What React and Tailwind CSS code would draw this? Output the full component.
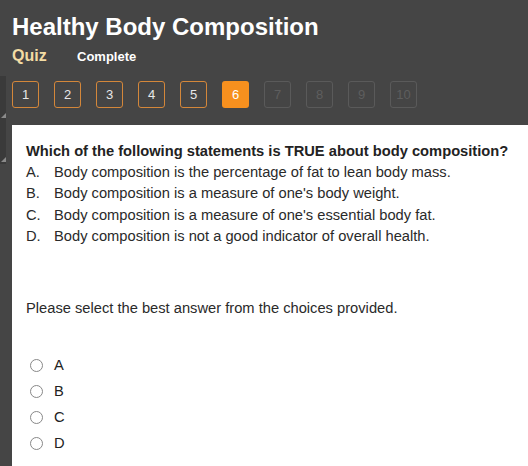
import React from "react";

const pages = [1, 2, 3, 4, 5, 6, 7, 8, 9, 10];
const current = 6;
const done = 5;

const choices = [
  ["A.", "Body composition is the percentage of fat to lean body mass."],
  ["B.", "Body composition is a measure of one's body weight."],
  ["C.", "Body composition is a measure of one's essential body fat."],
  ["D.", "Body composition is not a good indicator of overall health."],
];

function PageButton({ n }) {
  if (n === current) {
    return (
      <div className="w-[27px] h-[27px] rounded-[3px] bg-[#f7901e] flex items-center justify-center text-[13px] text-white">
        {n}
      </div>
    );
  }
  if (n <= done) {
    return (
      <div className="w-[27px] h-[27px] rounded-[3px] border border-[#d4873a] flex items-center justify-center text-[13px] text-[#e8e8e8]">
        {n}
      </div>
    );
  }
  return (
    <div className="w-[27px] h-[27px] rounded-[3px] border border-[#5a5a5a] flex items-center justify-center text-[13px] text-[#5e5e5e]">
      {n}
    </div>
  );
}

function Grip() {
  return (
    <div className="h-[44px] w-[6px] bg-[#3a3a3a] relative">
      <div className="absolute right-0 bottom-[2px] w-0 h-0 border-l-[5px] border-l-transparent border-b-[5px] border-b-[#8a8a8a]" />
    </div>
  );
}

export default function App() {
  return (
    <div
      className="w-[528px] h-[466px] bg-[#454545] overflow-hidden relative"
      style={{ fontFamily: '"Liberation Sans", Arial, sans-serif' }}
    >
      {/* left edge grips */}
      <div className="absolute left-0 top-[76px] flex flex-col">
        <Grip />
        <Grip />
      </div>

      <div className="pl-[12px] pt-[12px]">
        <h1 className="text-[24px] font-bold text-white leading-[30px]">Healthy Body Composition</h1>
        <div className="flex items-baseline mt-[2px] h-[24px]">
          <span className="text-[16px] font-bold text-[#f3dca4] w-[65px]">Quiz</span>
          <span className="text-[13px] font-bold text-white">Complete</span>
        </div>
        <div className="flex gap-[15px] mt-[13px]">
          {pages.map((n) => (
            <PageButton key={n} n={n} />
          ))}
        </div>
      </div>

      <div className="absolute left-[12px] top-[125px] right-0 bottom-0 bg-white pl-[14px] pt-[16px] text-[#222]">
        <p className="text-[14.7px] font-bold leading-[20px]">
          Which of the following statements is TRUE about body composition?
        </p>
        <div className="text-[14.7px] leading-[21.3px] text-[#2a2a2a] mt-[1px]">
          {choices.map(([l, t]) => (
            <div key={l} className="flex">
              <span className="w-[28px]">{l}</span>
              <span>{t}</span>
            </div>
          ))}
        </div>
        <p className="text-[14.7px] leading-[20px] mt-[51px] text-[#2a2a2a]">
          Please select the best answer from the choices provided.
        </p>
        <div className="mt-[34px] flex flex-col">
          {["A", "B", "C", "D"].map((o) => (
            <label key={o} className="flex items-center h-[26px] text-[14.7px] text-[#222]">
              <span className="w-[13px] h-[13px] rounded-full border border-[#888] ml-[4px] mr-[11px] bg-white" />
              {o}
            </label>
          ))}
        </div>
      </div>
    </div>
  );
}
